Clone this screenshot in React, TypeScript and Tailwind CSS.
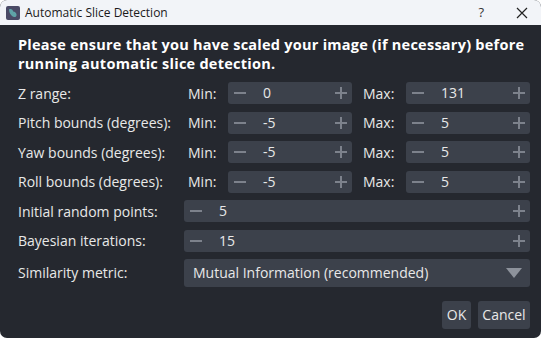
import React from "react";

const font = { fontFamily: '"Segoe UI", "Open Sans", "Noto Sans", sans-serif' };

function Minus() {
  return (
    <svg width="12" height="12" viewBox="0 0 12 12" className="shrink-0">
      <rect x="0" y="5" width="12" height="2" fill="#7d828c" />
    </svg>
  );
}
function Plus() {
  return (
    <svg width="12" height="12" viewBox="0 0 12 12" className="shrink-0">
      <rect x="0" y="5" width="12" height="2" fill="#7d828c" />
      <rect x="5" y="0" width="2" height="12" fill="#7d828c" />
    </svg>
  );
}

function Spin({ value, wide }: { value: string; wide?: boolean }) {
  return (
    <div
      className={`flex h-[22px] items-center rounded-[3px] bg-[#3c414b] pl-[6px] pr-[5px] ${
        wide ? "w-[346px]" : "w-[124px]"
      }`}
    >
      <Minus />
      <span className="ml-[17px] flex-1 text-[14px] leading-none text-[#e8e8e8]">{value}</span>
      <Plus />
    </div>
  );
}

function RangeRow({ label, min, max }: { label: string; min: string; max: string }) {
  return (
    <div className="flex h-[22px] items-center">
      <div className="w-[177px] pl-[7px] text-[14px] text-[#e8e8e8]">{label}</div>
      <div className="w-[40px] text-[14px] text-[#e8e8e8]">Min:</div>
      <Spin value={min} />
      <div className="ml-[11px] w-[43px] text-[14px] text-[#e8e8e8]">Max:</div>
      <Spin value={max} />
    </div>
  );
}

function SingleRow({ label, value }: { label: string; value: string }) {
  return (
    <div className="flex h-[22px] items-center">
      <div className="w-[173px] pl-[7px] text-[14px] text-[#e8e8e8]">{label}</div>
      <Spin value={value} wide />
    </div>
  );
}

export default function App() {
  return (
    <div className="h-[338px] w-[541px] bg-white" style={font}>
      <div className="flex h-full w-full flex-col overflow-hidden rounded-[7px] bg-[#25282f]">
        <div className="flex h-[25px] shrink-0 items-center bg-[#f2f4f8] pl-[6px]">
          <svg width="14" height="14" viewBox="0 0 14 14">
            <rect x="0" y="0" width="14" height="14" rx="2" fill="#4a4a66" />
            <path d="M3 3.5 C5 2.5 7 3.5 7 5.5 C8.5 5.5 11 7 10.5 9.5 C10 11.5 7.5 11.5 6 10 C5 9 3 7 3 3.5 Z" fill="#5fa3a8" />
          </svg>
          <span className="ml-[5px] text-[12px] text-[#1a1a1a]">Automatic Slice Detection</span>
          <div className="flex-1" />
          <span className="mr-[32px] text-[13px] text-[#333]">?</span>
          <svg width="12" height="12" viewBox="0 0 12 12" className="mr-[13px]">
            <path d="M1 1 L11 11 M11 1 L1 11" stroke="#222" strokeWidth="1.2" />
          </svg>
        </div>
        <div className="flex flex-1 flex-col px-[11px]">
          <div className="mt-[10px] pl-[7px] text-[14.5px] font-bold leading-[19px] tracking-[0.25px] text-white">
            Please ensure that you have scaled your image (if necessary) before running automatic slice detection.
          </div>
          <div className="mt-[9px] flex flex-col gap-[7.6px]">
            <RangeRow label="Z range:" min="0" max="131" />
            <RangeRow label="Pitch bounds (degrees):" min="-5" max="5" />
            <RangeRow label="Yaw bounds (degrees):" min="-5" max="5" />
            <RangeRow label="Roll bounds (degrees):" min="-5" max="5" />
            <SingleRow label="Initial random points:" value="5" />
            <SingleRow label="Bayesian iterations:" value="15" />
          </div>
          <div className="mt-[7px] flex h-[28px] items-center">
            <div className="w-[173px] pl-[7px] text-[14px] text-[#e8e8e8]">Similarity metric:</div>
            <div className="flex h-[28px] w-[346px] items-center rounded-[3px] bg-[#3c414b] pl-[9px] pr-[8px]">
              <span className="flex-1 text-[14px] text-[#e8e8e8]">Mutual Information (recommended)</span>
              <svg width="16" height="10" viewBox="0 0 16 10">
                <path d="M0 0 L16 0 L8 10 Z" fill="#8d929b" />
              </svg>
            </div>
          </div>
          <div className="mt-[14px] flex justify-end gap-[7px]">
            <button className="h-[28px] w-[29px] rounded-[3px] bg-[#3c414b] text-[14px] text-[#e8e8e8]">OK</button>
            <button className="h-[28px] w-[52px] rounded-[3px] bg-[#3c414b] text-[14px] text-[#e8e8e8]">Cancel</button>
          </div>
        </div>
      </div>
    </div>
  );
}
